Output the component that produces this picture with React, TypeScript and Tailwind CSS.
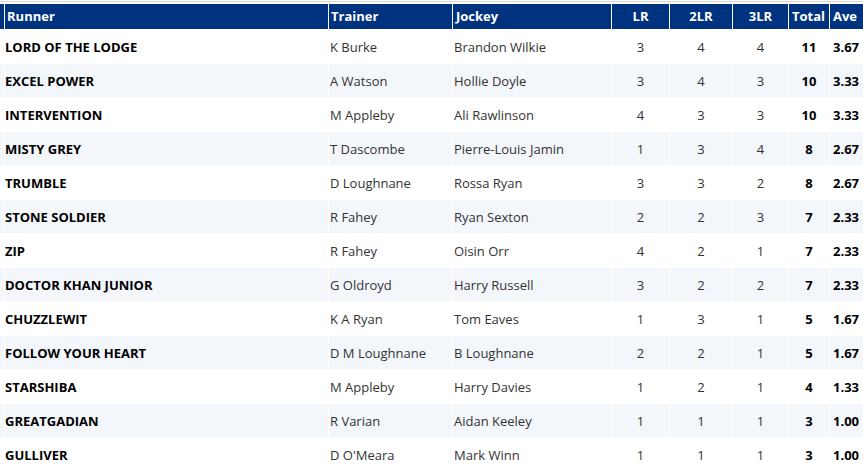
import React from 'react';

type Row = {
  runner: string;
  trainer: string;
  jockey: string;
  lr: number;
  lr2: number;
  lr3: number;
  total: number;
  ave: string;
};

const rows: Row[] = [
  { runner: 'LORD OF THE LODGE', trainer: 'K Burke', jockey: 'Brandon Wilkie', lr: 3, lr2: 4, lr3: 4, total: 11, ave: '3.67' },
  { runner: 'EXCEL POWER', trainer: 'A Watson', jockey: 'Hollie Doyle', lr: 3, lr2: 4, lr3: 3, total: 10, ave: '3.33' },
  { runner: 'INTERVENTION', trainer: 'M Appleby', jockey: 'Ali Rawlinson', lr: 4, lr2: 3, lr3: 3, total: 10, ave: '3.33' },
  { runner: 'MISTY GREY', trainer: 'T Dascombe', jockey: 'Pierre-Louis Jamin', lr: 1, lr2: 3, lr3: 4, total: 8, ave: '2.67' },
  { runner: 'TRUMBLE', trainer: 'D Loughnane', jockey: 'Rossa Ryan', lr: 3, lr2: 3, lr3: 2, total: 8, ave: '2.67' },
  { runner: 'STONE SOLDIER', trainer: 'R Fahey', jockey: 'Ryan Sexton', lr: 2, lr2: 2, lr3: 3, total: 7, ave: '2.33' },
  { runner: 'ZIP', trainer: 'R Fahey', jockey: 'Oisin Orr', lr: 4, lr2: 2, lr3: 1, total: 7, ave: '2.33' },
  { runner: 'DOCTOR KHAN JUNIOR', trainer: 'G Oldroyd', jockey: 'Harry Russell', lr: 3, lr2: 2, lr3: 2, total: 7, ave: '2.33' },
  { runner: 'CHUZZLEWIT', trainer: 'K A Ryan', jockey: 'Tom Eaves', lr: 1, lr2: 3, lr3: 1, total: 5, ave: '1.67' },
  { runner: 'FOLLOW YOUR HEART', trainer: 'D M Loughnane', jockey: 'B Loughnane', lr: 2, lr2: 2, lr3: 1, total: 5, ave: '1.67' },
  { runner: 'STARSHIBA', trainer: 'M Appleby', jockey: 'Harry Davies', lr: 1, lr2: 2, lr3: 1, total: 4, ave: '1.33' },
  { runner: 'GREATGADIAN', trainer: 'R Varian', jockey: 'Aidan Keeley', lr: 1, lr2: 1, lr3: 1, total: 3, ave: '1.00' },
  { runner: 'GULLIVER', trainer: "D O'Meara", jockey: 'Mark Winn', lr: 1, lr2: 1, lr3: 1, total: 3, ave: '1.00' },
];

const th = 'h-[25px] p-0 pt-px text-[13px] font-bold text-white bg-[#00337f] align-middle';

export default function App() {
  return (
    <div className="w-full h-[469px] overflow-hidden bg-white font-['Open_Sans',sans-serif]">
      <div className="h-px mt-px bg-[#d6d6d6]" />
      <table className="table-fixed border-separate border-spacing-px -ml-px mt-px w-[872px]">
        <colgroup>
          <col className="w-[4px]" />
          <col className="w-[323px]" />
          <col className="w-[123px]" />
          <col className="w-[158px]" />
          <col className="w-[57px]" />
          <col className="w-[62px]" />
          <col className="w-[55px]" />
          <col className="w-[40px]" />
          <col className="w-[40px]" />
        </colgroup>
        <thead>
          <tr>
            <th className={th}></th>
            <th className={`${th} text-left pl-[2px]`}>Runner</th>
            <th className={`${th} text-left pl-[2px]`}>Trainer</th>
            <th className={`${th} text-left pl-[3px]`}>Jockey</th>
            <th className={`${th} text-center`}>LR</th>
            <th className={`${th} text-center`}>2LR</th>
            <th className={`${th} text-center`}>3LR</th>
            <th className={`${th} text-left pl-[3px]`}>Total</th>
            <th className={`${th} text-left pl-[3px]`}>Ave</th>
          </tr>
        </thead>
        <tbody>
          {rows.map((r, i) => {
            const bg = i % 2 === 1 ? 'bg-[#f3f6fb]' : 'bg-white';
            const td = `h-[33px] p-0 pt-[2px] text-[13px] align-middle ${bg}`;
            return (
              <tr key={r.runner}>
                <td className={td}></td>
                <td className={`${td} text-left font-bold text-black`}>{r.runner}</td>
                <td className={`${td} text-left pl-px text-[#333]`}>{r.trainer}</td>
                <td className={`${td} text-left pl-px text-[#333]`}>{r.jockey}</td>
                <td className={`${td} text-center text-[#333]`}>{r.lr}</td>
                <td className={`${td} text-center text-[#333]`}>{r.lr2}</td>
                <td className={`${td} text-center text-[#333]`}>{r.lr3}</td>
                <td className={`${td} text-center font-bold text-black`}>{r.total}</td>
                <td className={`${td} text-left pl-[3px] font-bold text-black`}>{r.ave}</td>
              </tr>
            );
          })}
        </tbody>
      </table>
    </div>
  );
}
